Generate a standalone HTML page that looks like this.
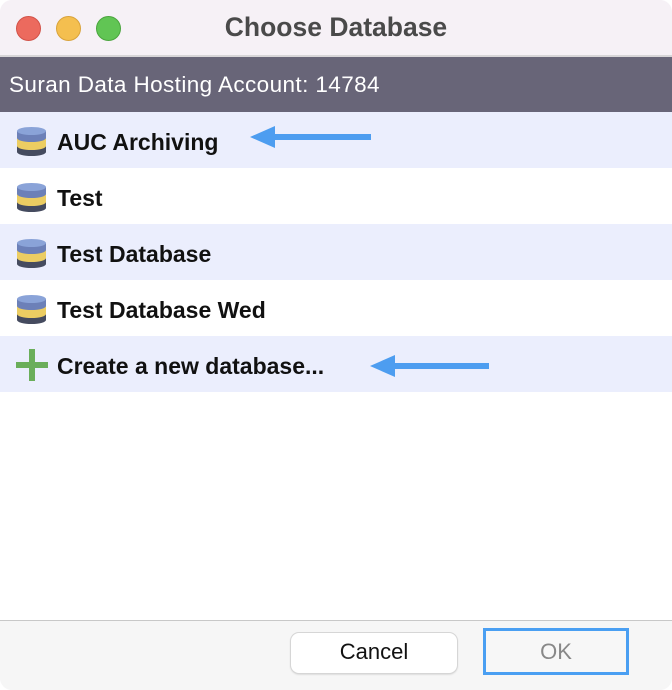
<!DOCTYPE html>
<html><head><style>
body{margin:0;width:672px;height:690px;background:#fff;font-family:"Liberation Sans",sans-serif;position:relative;overflow:hidden}
.win{position:absolute;left:0;top:0;width:672px;height:690px;background:#f6f4f7;border-radius:12px;overflow:hidden}
.title{position:absolute;top:0;left:0;right:0;height:55px;background:#f6f1f6;border-bottom:2px solid #d8d6d8;text-align:center;font-weight:bold;font-size:26.5px;color:#4a4a4a;line-height:54px}
.dot{position:absolute;top:16px;width:23px;height:23px;border-radius:50%}
.hdr{position:absolute;top:57px;left:0;right:0;height:55px;background:#686578;color:#fff;font-size:22.5px;letter-spacing:0.4px;line-height:55px;padding-left:9px}
.list{position:absolute;top:112px;left:0;right:0;height:508px;background:#fff}
.row{height:56px;position:relative;font-weight:bold;font-size:23px;letter-spacing:0;line-height:60px;padding-left:57px;color:#111}
.alt{background:#ebeefd}
.db{position:absolute;left:16px;top:14px}
.foot{position:absolute;top:620px;left:0;right:0;height:70px;background:#f6f6f6;border-top:1px solid #c8c8c8}
.btn{position:absolute;top:12px;height:40px;border-radius:8px;font-size:22px;text-align:center;line-height:38px}
</style></head><body>
<div class="win">
<div class="title">Choose Database
<div class="dot" style="left:16px;background:#ec6a5e;border:1px solid #d25248"></div>
<div class="dot" style="left:56px;background:#f4bf4f;border:1px solid #d9a33a"></div>
<div class="dot" style="left:96px;background:#61c554;border:1px solid #4aa53d"></div>
</div>
<div class="hdr">Suran Data Hosting Account: 14784</div>
<div class="list">
<div class="row alt"><svg class="db" width="31" height="31" viewBox="0 0 31 31"><path d="M1 5v21a14.5 4 0 0 0 29 0V5z" fill="#454b5f"/><path d="M1 5v15a14.5 4 0 0 0 29 0V5z" fill="#eccd62"/><path d="M1 5v7a14.5 4 0 0 0 29 0V5z" fill="#6c80b8"/><ellipse cx="15.5" cy="5" rx="14.5" ry="4" fill="#8aa3d8"/></svg>AUC Archiving
<svg style="position:absolute;left:250px;top:14px" width="122" height="22"><path d="M0 11L25 0v8h96v6H25v8z" fill="#4d9df0"/></svg></div>
<div class="row"><svg class="db" width="31" height="31" viewBox="0 0 31 31"><path d="M1 5v21a14.5 4 0 0 0 29 0V5z" fill="#454b5f"/><path d="M1 5v15a14.5 4 0 0 0 29 0V5z" fill="#eccd62"/><path d="M1 5v7a14.5 4 0 0 0 29 0V5z" fill="#6c80b8"/><ellipse cx="15.5" cy="5" rx="14.5" ry="4" fill="#8aa3d8"/></svg>Test</div>
<div class="row alt"><svg class="db" width="31" height="31" viewBox="0 0 31 31"><path d="M1 5v21a14.5 4 0 0 0 29 0V5z" fill="#454b5f"/><path d="M1 5v15a14.5 4 0 0 0 29 0V5z" fill="#eccd62"/><path d="M1 5v7a14.5 4 0 0 0 29 0V5z" fill="#6c80b8"/><ellipse cx="15.5" cy="5" rx="14.5" ry="4" fill="#8aa3d8"/></svg>Test Database</div>
<div class="row"><svg class="db" width="31" height="31" viewBox="0 0 31 31"><path d="M1 5v21a14.5 4 0 0 0 29 0V5z" fill="#454b5f"/><path d="M1 5v15a14.5 4 0 0 0 29 0V5z" fill="#eccd62"/><path d="M1 5v7a14.5 4 0 0 0 29 0V5z" fill="#6c80b8"/><ellipse cx="15.5" cy="5" rx="14.5" ry="4" fill="#8aa3d8"/></svg>Test Database Wed</div>
<div class="row alt"><svg style="position:absolute;left:16px;top:13px" width="32" height="32"><path d="M13 0h6v13h13v6H19v13h-6V19H0v-6h13z" fill="#6aae5a"/></svg>Create a new database...
<svg style="position:absolute;left:370px;top:19px" width="120" height="22"><path d="M0 11L25 0v8h94v6H25v8z" fill="#4d9df0"/></svg></div>
</div>
<div class="foot">
<div class="btn" style="left:291px;width:166px;background:#fff;box-shadow:0 0 0 1px #d6d6d6,0 1px 2px #bbb;color:#111">Cancel</div>
<div class="btn" style="left:483px;top:7px;width:140px;height:41px;border-radius:0;border:3px solid #4a9ff2;background:#f7f7f7;color:#888;line-height:41px">OK</div>
</div>
</div>
</body></html>
